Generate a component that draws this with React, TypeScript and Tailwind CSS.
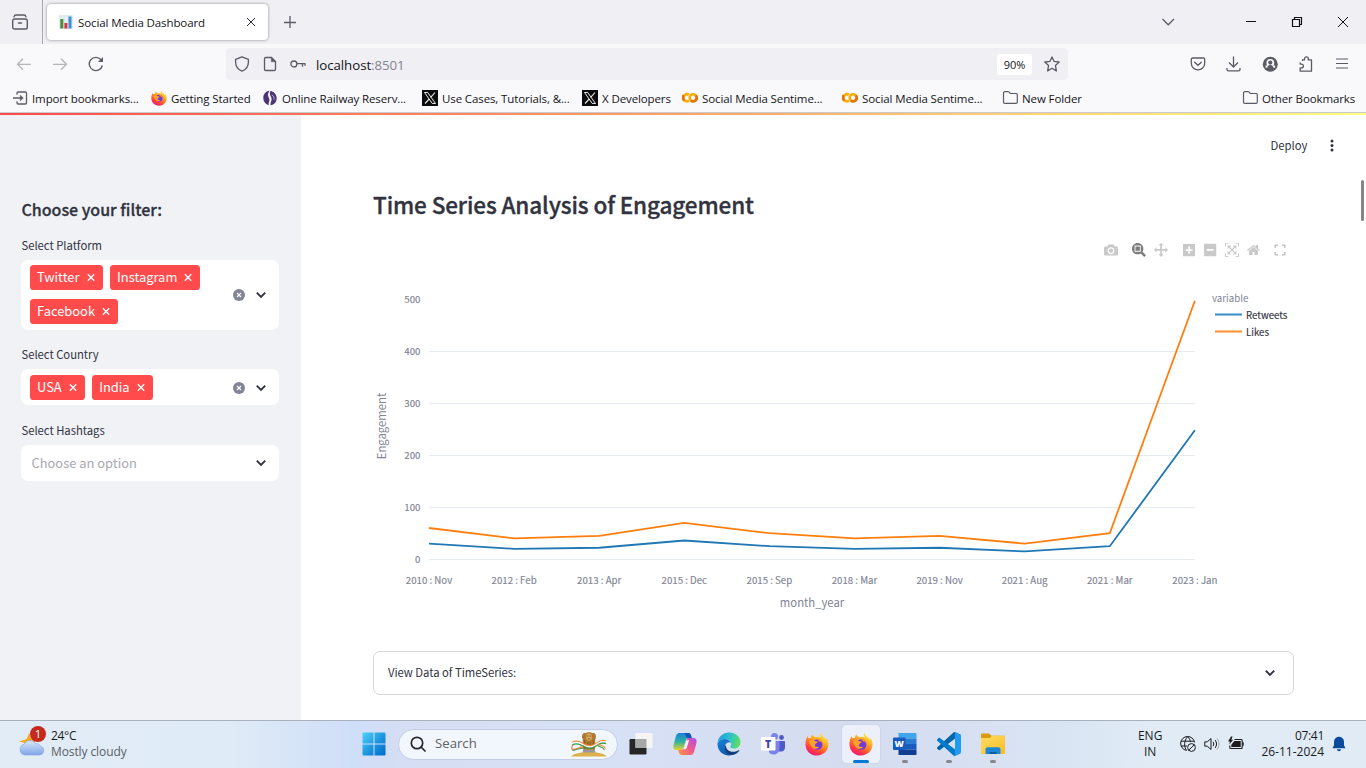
import React from 'react';

const UI = 'font-["Open_Sans","Noto_Sans",sans-serif]';
const SRC = 'font-["Noto_Sans_CJK_SC",sans-serif]';

/* ---------- brand marks ---------- */

function Firefox({ id, className }: { id: string; className: string }) {
  return (
    <svg viewBox="0 0 24 24" className={className}>
      <defs>
        <linearGradient id={id} x1="0.8" y1="0" x2="0.25" y2="1">
          <stop offset="0" stopColor="#fff44f" />
          <stop offset="0.3" stopColor="#ffbd2b" />
          <stop offset="0.55" stopColor="#ff7a24" />
          <stop offset="0.8" stopColor="#ff3647" />
          <stop offset="1" stopColor="#e31587" />
        </linearGradient>
      </defs>
      <path
        d="M15.1.3c-.8 2-.4 3.600 1 5.100C14.800 4.700 13 4.700 11 5.200 9 4.600 8 3.600 7.300 2.400 6.200 3.600 5.900 4.900 6 6 5 5.900 4.300 6.100 3.700 6.400 3.100 5.900 2.800 5 2.800 4 1.200 6.300.5 9.200.5 12.400.5 18.700 5.500 23.500 12 23.500S23.500 18.500 23.500 12.300c0-3-1-5.400-2.500-6.800.2.800.3 1.500.2 2.200C19.700 5 16.200 4.500 15.100.3z"
        fill={'url(#' + id + ')'}
      />
      <circle cx="12.200" cy="12.500" r="5.200" fill="#7139d8" />
      <path d="M12 7.300c3.300-.5 6 2 6 5.200-.8-1.800-2.200-2.700-3.900-2.900z" fill="#ff8a2a" />
      <path d="M4.200 8.500C6.500 7 9 8 10.300 9.300c1.200.1 2.600.3 2.500.8-.2.900-1.900 1.300-2.400 1.800-.4.500-.1 1.600-.9 2 1.200 1.200 3.400.7 4.700 1.200-1.500 2-5.200 2.400-7 .3C5.500 13.300 4 11 4.200 8.500z" fill="#ffa02b" />
    </svg>
  );
}

function XMark() {
  return (
    <svg viewBox="0 0 16 16" className="h-4 w-4">
      <rect width="16" height="16" fill="#0b0b0b" />
      <path d="M2.500 2.500h3.200l7.800 11h-3.200z" fill="none" stroke="#e8e8e8" strokeWidth="1" />
      <path d="M13 2.500L8.700 7.300M7.200 9L3 13.500" stroke="#e8e8e8" strokeWidth="1.100" />
    </svg>
  );
}

function Colab() {
  return (
    <svg viewBox="0 0 16 16" className="h-4 w-4" fill="none" strokeWidth="2.600">
      <path d="M7 4.900A3.500 3.500 0 1 0 7 10.600" stroke="#f9ab00" />
      <path d="M1.900 5.300A3.500 3.500 0 0 0 2.200 10.400" stroke="#e8710a" />
      <circle cx="11.200" cy="7.800" r="3.500" stroke="#f9ab00" />
      <path d="M8.700 10.300A3.500 3.500 0 0 0 13.700 5.300" stroke="#e8710a" />
    </svg>
  );
}

function RailMark() {
  return (
    <svg viewBox="0 0 16 16" className="h-4 w-4">
      <path d="M7.500.8C3.500 1.300 1.300 4.300 1.300 8c0 3.500 2.300 6.400 5.700 7.200C5.800 13 8 11.500 7.300 9 6.700 7 4.700 5 7.500.8z" fill="#4b3577" />
      <path d="M8.500 1C6.600 4 9.500 6.500 9.600 9c.1 2.300-1.600 3.800-1 6.200C12.300 15 14.700 11.900 14.700 8.300c0-3.600-2.500-6.700-6.200-7.300z" fill="#4b3577" />
      <path d="M9.800 4.800c2 1.200 2.700 3 2.200 5" stroke="#cfc8e0" strokeWidth="0.800" fill="none" />
    </svg>
  );
}

function Folder() {
  return (
    <svg viewBox="0 0 16 16" className="h-4 w-4" fill="none" stroke="#5b5b66" strokeWidth="1.200">
      <path d="M1.500 4V3a1.300 1.300 0 0 1 1.300-1.300h3.200c.5 0 .8.2 1.100.5l1.100 1.300h5.600A1.300 1.300 0 0 1 15.300 4.800v7.200a1.300 1.300 0 0 1-1.300 1.300H2.800A1.300 1.300 0 0 1 1.500 12z" />
    </svg>
  );
}

function ImportIcon() {
  return (
    <svg viewBox="0 0 16 16" className="h-4 w-4" fill="none" stroke="#5b5b66" strokeWidth="1.300">
      <path d="M5 4.800V3.200A1.200 1.200 0 0 1 6.200 2h7.100A1.200 1.200 0 0 1 14.500 3.200v9.600a1.200 1.200 0 0 1-1.200 1.200H6.200A1.200 1.200 0 0 1 5 12.800v-1.600M1 8h9" />
      <path d="M8.300 5.200L11.300 8l-3 2.800z" fill="#5b5b66" strokeWidth="0.600" />
    </svg>
  );
}

/* ---------- browser chrome ---------- */

function TabStrip() {
  return (
    <div className="flex h-11 shrink-0 items-center bg-[#f0eff4]">
      <div className="flex h-11 w-[43px] shrink-0 items-center justify-end border-r border-[#a9a9b0] pr-[14px]">
        <svg viewBox="0 0 16 16" className="h-4 w-4" fill="none" stroke="#5b5b66" strokeWidth="1.400" strokeLinecap="round">
          <rect x="0.700" y="5" width="14.600" height="10" rx="1.800" />
          <path d="M2 2.800C2.300 1.500 3 1 4 1h8c1 0 1.700.5 2 1.800M6.500 9h3" />
        </svg>
      </div>
      <div className="ml-1 flex h-9 w-[221px] items-center rounded bg-white pl-3 pr-[11px] shadow-[0_0_3px_rgba(0,0,0,0.45)]">
        <svg viewBox="0 0 14 14" className="h-[14px] w-[14px]">
          <rect width="14" height="14" rx="1" fill="#dce9ee" />
          <path d="M0 3.500h14M0 7h14M0 10.500h14M3.500 0v14M7 0v14M10.500 0v14" stroke="#f4f8fa" strokeWidth="0.600" />
          <rect x="1.300" y="4" width="3" height="9.500" fill="#4c8f34" />
          <rect x="5.400" y="8" width="3" height="5.500" fill="#d8314a" />
          <rect x="9.500" y="1.500" width="3" height="12" fill="#3d8fd6" />
        </svg>
        <span className={UI + ' ml-[5px] flex-1 whitespace-nowrap pt-[2px] text-[11.500px] tracking-[-0.110px] text-[#15141a]'}>Social Media Dashboard</span>
        <svg viewBox="0 0 12 12" className="h-3 w-3" stroke="#2b2a33" strokeWidth="1"><path d="M2 2l8 8M10 2l-8 8" /></svg>
      </div>
      <svg viewBox="0 0 14 14" className="ml-[15px] h-[14px] w-[14px]" stroke="#5b5b66" strokeWidth="1.300"><path d="M7 1v12M1 7.500h12" /></svg>
      <div className="flex flex-1 items-center justify-end pr-[17px]">
        <svg viewBox="0 0 14 8" className="mr-[70px] h-2 w-[14px]" fill="none" stroke="#5b5b66" strokeWidth="1.300"><path d="M1.500 1l5.700 5.800L13 1" /></svg>
        <svg viewBox="0 0 12 12" className="mr-[34px] h-3 w-3" shapeRendering="crispEdges"><rect x="1" y="5" width="10" height="1" fill="#111" /></svg>
        <svg viewBox="0 0 12 12" className="mr-[34px] h-3 w-3" fill="none" stroke="#111" strokeWidth="1.200"><path d="M1.500 3.500h7v7h-7zM3.500 3.500v-2h7v7h-2" /></svg>
        <svg viewBox="0 0 12 12" className="h-3 w-3" stroke="#111" strokeWidth="1"><path d="M1 1l10 10M11 1L1 11" /></svg>
      </div>
    </div>
  );
}

function NavBar() {
  return (
    <div className="flex h-10 shrink-0 items-center bg-[#f9f9fb]">
      <div className="flex w-[226px] items-center gap-5 pl-4">
        <svg viewBox="0 0 16 16" className="h-4 w-4" fill="none" stroke="#b5b5bb" strokeWidth="1.300"><path d="M15 8.300H1.500M7 2.800L1.500 8.300 7 13.800" /></svg>
        <svg viewBox="0 0 16 16" className="h-4 w-4" fill="none" stroke="#b5b5bb" strokeWidth="1.300"><path d="M1 8.300h13.500M9 2.800l5.500 5.500L9 13.800" /></svg>
        <svg viewBox="0 0 16 16" className="h-4 w-4" fill="none" stroke="#5b5b66" strokeWidth="1.400"><path d="M14.300 9.500A6.600 6.600 0 1 1 13 3.800L14 5" /><path d="M15 1v5h-5z" fill="#5b5b66" stroke="none" /></svg>
      </div>
      <div className="flex h-8 w-[842px] items-center rounded bg-[#f0eff4] px-2">
        <svg viewBox="0 0 16 16" className="h-4 w-4" fill="none" stroke="#5b5b66" strokeWidth="1.300"><path d="M8 .8L1.600 3.300v2.900c0 4 2.300 7.200 6.400 9 4.100-1.800 6.400-5 6.400-9V3.300z" strokeLinejoin="round" /></svg>
        <svg viewBox="0 0 16 16" className="ml-3 h-4 w-4" fill="none" stroke="#5b5b66" strokeWidth="1.300"><path d="M9.500 1.500H3.700A1.200 1.200 0 0 0 2.500 2.700v10.600a1.200 1.200 0 0 0 1.200 1.200h8.600a1.200 1.200 0 0 0 1.200-1.200V5.500z" /><path d="M9.300 1.300v4.400h4.400z" fill="#5b5b66" strokeWidth="0.500" /></svg>
        <svg viewBox="0 0 16 16" className="ml-3 h-4 w-4" fill="none" stroke="#5b5b66" strokeWidth="1.300"><circle cx="3.900" cy="8" r="3" /><path d="M7 7.700h8.500M12.500 7.700v3M15 7.700v2" /></svg>
        <span className={UI + ' ml-[10px] flex-1 pt-[3px] text-[13.300px] tracking-[-0.070px] text-[#15141a]'}>localhost<span className="text-[#85858d]">:8501</span></span>
        <span className={UI + ' flex h-[21px] w-[35px] items-center justify-center rounded-[3px] bg-white pt-[2px] text-[11px] text-[#15141a]'}>90%</span>
        <svg viewBox="0 0 16 16" className="ml-3 h-4 w-4" fill="none" stroke="#5b5b66" strokeWidth="1.300" strokeLinejoin="round"><path d="M8 .9l2.100 4.500 5.100.6-3.800 3.400 1 5.500L8 12.300l-4.400 2.600 1-5.500L.8 6l5.100-.6z" /></svg>
      </div>
      <div className="flex flex-1 items-center justify-end gap-5 pr-4">
        <svg viewBox="0 0 16 16" className="h-4 w-4" fill="none" stroke="#5b5b66" strokeWidth="1.300"><path d="M2.500 2h11a1.200 1.200 0 0 1 1.200 1.200v4A6.700 6.700 0 0 1 8 13.900 6.700 6.700 0 0 1 1.300 7.200v-4A1.200 1.200 0 0 1 2.500 2z" /><path d="M4.700 6.200L8 9.300l3.300-3.100" strokeLinecap="round" /></svg>
        <svg viewBox="0 0 16 16" className="h-4 w-4" fill="none" stroke="#5b5b66" strokeWidth="1.300"><path d="M7.500.5v10.300M3 6.500L7.500 11 12 6.500M1 12v1.500a1.300 1.300 0 0 0 1.300 1.300h10.400a1.300 1.300 0 0 0 1.300-1.300V12" /></svg>
        <svg viewBox="0 0 16 16" className="h-4 w-4"><circle cx="8.300" cy="8.300" r="7.500" fill="#5b5b66" /><circle cx="8.300" cy="7" r="3.900" fill="#f9f9fb" /><circle cx="8.300" cy="6.600" r="2.100" fill="#5b5b66" /><path d="M3.500 9.500h9.600v2.200H3.500z" fill="#f9f9fb" /><path d="M5.300 12c0-1.800 1.100-3 3-3s3 1.200 3 3z" fill="#5b5b66" /></svg>
        <svg viewBox="0 0 16 16" className="h-4 w-4" fill="none" stroke="#5b5b66" strokeWidth="1.300" strokeLinejoin="round"><path d="M4.500 5V3.900h2V2.800a1.900 1.900 0 0 1 3.800 0v1.100h3.200v11.300H2.200v-3.300h1.300a1.900 1.900 0 0 0 0-3.800H2.200V6.500" /></svg>
        <svg viewBox="0 0 16 16" className="h-4 w-4" stroke="#5b5b66" strokeWidth="1.200"><path d="M2 3h12M2 7.500h12M2 12h12" /></svg>
      </div>
    </div>
  );
}

function Bookmark({ w, icon, children }: { w: string; icon: React.ReactNode; children: React.ReactNode }) {
  return (
    <div className={w + ' flex items-center gap-1'}>
      {icon}
      <span className={UI + ' whitespace-nowrap pt-px text-[11.500px] tracking-[-0.110px] text-[#15141a]'}>{children}</span>
    </div>
  );
}

function BookmarksBar() {
  return (
    <div className="flex h-[29px] shrink-0 border-b border-[#c9c9d0] bg-[#f9f9fb] pl-3">
      <Bookmark w="w-[139px]" icon={<ImportIcon />}>Import bookmarks...</Bookmark>
      <Bookmark w="w-[111px]" icon={<Firefox id="ffb" className="h-4 w-4" />}>Getting Started</Bookmark>
      <Bookmark w="w-[160px]" icon={<RailMark />}>Online Railway Reserv...</Bookmark>
      <Bookmark w="w-[160px]" icon={<XMark />}>Use Cases, Tutorials, &amp;...</Bookmark>
      <Bookmark w="w-[100px]" icon={<XMark />}>X Developers</Bookmark>
      <Bookmark w="w-[160px]" icon={<Colab />}>Social Media Sentime...</Bookmark>
      <Bookmark w="w-[160px]" icon={<Colab />}>Social Media Sentime...</Bookmark>
      <Bookmark w="w-[240px]" icon={<Folder />}>New Folder</Bookmark>
      <Bookmark w="w-[120px]" icon={<Folder />}>Other Bookmarks</Bookmark>
    </div>
  );
}

/* ---------- sidebar ---------- */

function Tag({ children }: { children: string }) {
  return (
    <span className="flex h-[25px] items-center gap-[7px] rounded-[3.600px] bg-[#ff4b4b] px-[7px] text-[12.900px] text-white">
      <span className="pb-[2px] leading-[23px]">{children}</span>
      <svg viewBox="0 0 10 10" className="h-[9px] w-[9px]" stroke="#fff" strokeWidth="1.500"><path d="M1 1.500l7 7M8 1.500l-7 7" /></svg>
    </span>
  );
}

function Chevron() {
  return (
    <svg viewBox="0 0 10 8" className="h-2 w-[10px] shrink-0" fill="none" stroke="#31333f" strokeWidth="1.900"><path d="M.8 1.700L5 5.900l4.200-4.200" /></svg>
  );
}

function Clear() {
  return (
    <svg viewBox="0 0 12 12" className="mr-[11px] h-3 w-3 shrink-0"><circle cx="6" cy="6" r="6" fill="#808495" /><path d="M4 4l4 4M8 4L4 8" stroke="#fff" strokeWidth="1.200" /></svg>
  );
}

function Select({ label, box, tags, placeholder }: { label: string; box: string; tags?: string[]; placeholder?: string }) {
  return (
    <div className="flex flex-col">
      <label className="h-[25px] pl-[0.500px] text-[11.300px] leading-[20px] tracking-[-0.030px]">{label}</label>
      <div className={box + ' flex items-center rounded-[7px] bg-white pl-[9px] pr-[13px]'}>
        <div className="flex flex-1 flex-wrap gap-x-[7.500px] gap-y-[9px]">
          {tags ? tags.map((t) => <Tag key={t}>{t}</Tag>) : <span className="pl-[1.500px] text-[12.900px] leading-5 text-[#a8a9b0]">{placeholder}</span>}
        </div>
        {tags && <Clear />}
        <Chevron />
      </div>
    </div>
  );
}

function Sidebar() {
  return (
    <aside className="w-[301px] shrink-0 bg-[#f0f2f6] pl-[21px] pr-[22px] pt-[81px]">
      <h2 className="mb-[13px] h-[26px] pl-[0.500px] text-base font-medium leading-[26px] [-webkit-text-stroke:0.300px_#31333f]">Choose your filter:</h2>
      <div className="flex flex-col gap-[14px]">
        <Select label="Select Platform" box="h-[70px] pb-px" tags={['Twitter', 'Instagram', 'Facebook']} />
        <Select label="Select Country" box="h-9 pt-px" tags={['USA', 'India']} />
        <div className="pt-px"><Select label="Select Hashtags" box="h-9" placeholder="Choose an option" /></div>
      </div>
    </aside>
  );
}

/* ---------- chart ---------- */

const MONTHS = ['2010 : Nov', '2012 : Feb', '2013 : Apr', '2015 : Dec', '2015 : Sep', '2018 : Mar', '2019 : Nov', '2021 : Aug', '2021 : Mar', '2023 : Jan'];
const RETWEETS = [30, 20, 22, 36, 25, 20, 22, 15, 25, 248];
const LIKES = [60, 40, 45, 70, 50, 40, 45, 30, 50, 497];
const STEP = 85.1;
const sx = (i: number) => 56 + i * STEP;
const sy = (v: number) => 269.2 - v * 0.52;
const line = (d: number[]) => d.map((v, i) => sx(i) + ',' + sy(v)).join(' ');

function Chart() {
  return (
    <svg viewBox="0 0 921 335" className="block h-[335px] w-[921px] overflow-visible" fill="#808495" fontSize="9.7">
      {[0, 100, 200, 300, 400].map((v) => (
        <line key={v} x1="56" x2="822" y1={sy(v) + 0.3} y2={sy(v) + 0.3} stroke="#e6eaf1" strokeWidth="1.200" />
      ))}
      {[0, 100, 200, 300, 400, 500].map((v) => (
        <text key={v} x="47.500" y={sy(v) + 4} textAnchor="end" stroke="#808495" strokeWidth="0.150">{v}</text>
      ))}
      {MONTHS.map((m, i) => (
        <text key={m} x={sx(i)} y="294" textAnchor="middle" stroke="#808495" strokeWidth="0.150">{m}</text>
      ))}
      <text x="439" y="317" textAnchor="middle" fontSize="11.3">month_year</text>
      <text transform="translate(13 136) rotate(-90)" textAnchor="middle" fontSize="11.3">Engagement</text>
      <polyline points={line(RETWEETS)} fill="none" stroke="#1f77b4" strokeWidth="1.800" />
      <polyline points={line(LIKES)} fill="none" stroke="#ff7f0e" strokeWidth="1.800" />
      <text x="839" y="12">variable</text>
      <line x1="842" x2="869" y1="24.500" y2="24.500" stroke="#4190c9" strokeWidth="2.100" />
      <line x1="842" x2="869" y1="41.500" y2="41.500" stroke="#ff9433" strokeWidth="2.100" />
      <text x="873" y="29" fill="#31333f" stroke="#31333f" strokeWidth="0.150">Retweets</text>
      <text x="873" y="46" fill="#31333f" stroke="#31333f" strokeWidth="0.150">Likes</text>
    </svg>
  );
}

const MODE_ICONS = [
  { w: 1000, gap: 'mr-[14px]', c: '#c9c9c9', d: 'm500 450c-83 0-150-67-150-150 0-83 67-150 150-150 83 0 150 67 150 150 0 83-67 150-150 150z m400 150h-120c-16 0-34 13-39 29l-31 93c-6 15-23 28-40 28h-340c-16 0-34-13-39-28l-31-94c-6-15-23-28-40-28h-120c-55 0-100-45-100-100v-450c0-55 45-100 100-100h800c55 0 100 45 100 100v450c0 55-45 100-100 100z m-400-550c-138 0-250 112-250 250 0 138 112 250 250 250 138 0 250-112 250-250 0-138-112-250-250-250z m365 380c-19 0-35 16-35 35 0 19 16 35 35 35 19 0 35-16 35-35 0-19-16-35-35-35z' },
  { w: 1000, gap: 'mr-[8px]', c: '#7d7d7d', d: 'm1000-25l-250 251c40 63 63 138 63 218 0 224-182 406-407 406-224 0-406-182-406-406s183-406 407-406c80 0 155 22 218 62l250-250 125 125z m-812 250l0 438 437 0 0-438-437 0z m62 375l313 0 0-312-313 0 0 312z' },
  { w: 1000, gap: 'mr-[15.500px]', c: '#c9c9c9', d: 'm1000 350l-187 188 0-125-250 0 0 250 125 0-188 187-187-187 125 0 0-250-250 0 0 125-188-188 186-187 0 125 252 0 0-250-125 0 187-188 188 188-125 0 0 250 250 0 0-126 187 188z' },
  { w: 875, gap: 'mr-[9px]', c: '#c9c9c9', d: 'm1 787l0-875 875 0 0 875-875 0z m687-500l-187 0 0-187-125 0 0 187-188 0 0 125 188 0 0 187 125 0 0-187 187 0 0-125z' },
  { w: 875, gap: 'mr-[8.500px]', c: '#c9c9c9', d: 'm0 788l0-876 875 0 0 876-875 0z m688-500l-500 0 0 125 500 0 0-125z' },
  { w: 1000, gap: 'mr-[7.500px]', c: '#c9c9c9', d: 'm250 850l-187 0-63 0 0-62 0-188 63 0 0 188 187 0 0 62z m688 0l-188 0 0-62 188 0 0-188 62 0 0 188 0 62-62 0z m-875-938l0 188-63 0 0-188 0-62 63 0 187 0 0 62-187 0z m875 188l0-188-188 0 0-62 188 0 62 0 0 62 0 188-62 0z m-125 188l-1 0-93-94-156 156 156 156 92-93 2 0 0 250-250 0 0-2 93-92-156-156-156 156 94 92 0 2-250 0 0-250 0 0 93 93 157-156-157-156-93 94 0 0 0-250 250 0 0 0-94 93 156 157 156-157-93-93 0 0 250 0 0 250z' },
  { w: 929, gap: 'mr-[14.500px]', c: '#c9c9c9', d: 'm786 296v-267q0-15-11-26t-25-10h-214v214h-143v-214h-214q-15 0-25 10t-11 26v267q0 1 0 2t0 2l321 264 321-264q1-1 1-4z m124 39l-34-41q-5-5-12-6h-2q-7 0-12 3l-386 322-386-322q-7-4-13-4-7 2-12 7l-35 41q-4 5-3 13t6 12l401 334q18 15 42 15t43-15l136-114v109q0 8 5 13t13 5h107q8 0 13-5t5-13v-227l122-102q5-5 6-12t-4-13z' },
];

function ModeBar() {
  return (
    <div className="flex h-[14px] items-center justify-end pr-[8px]">
      {MODE_ICONS.map((m, i) => (
        <svg key={i} viewBox={'0 0 ' + m.w + ' 1000'} className={m.gap + ' h-[14px] w-auto'}>
          <path d={m.d} fill={m.c} transform="matrix(1 0 0 -1 0 850)" />
        </svg>
      ))}
      <svg viewBox="0 0 12 12" className="h-3 w-3" fill="none" stroke="#c6c6c6" strokeWidth="1.600"><path d="M1.300 4V1.300H4M8 1.300h2.700V4M10.700 8v2.700H8M4 10.700H1.300V8" /></svg>
    </div>
  );
}

function Main() {
  return (
    <main className="relative flex-1 bg-white">
      <div className="flex h-[61px] items-center justify-end pr-[28px] text-[11.300px] text-[#31333f]">
        <span>Deploy</span>
        <svg viewBox="0 0 12 14" className="ml-[18.500px] h-[14px] w-3" fill="#31333f"><circle cx="6" cy="2" r="1.500" /><circle cx="6" cy="6.500" r="1.500" /><circle cx="6" cy="11" r="1.500" /></svg>
      </div>
      <div className="ml-[72px] w-[921px]">
        <h3 className="mt-[12px] h-[33px] text-[22.500px] font-medium leading-[33px] tracking-[-0.120px] [-webkit-text-stroke:0.350px_#31333f]">Time Series Analysis of Engagement</h3>
        <div className="mt-[22px]"><ModeBar /></div>
        <div className="mt-[33px]"><Chart /></div>
        <div className="mt-[26px] flex h-[44px] items-center justify-between rounded-[7px] border border-[#d5d6d9] pl-[14px] pr-[18px] text-[11.300px] tracking-[-0.030px]">
          <span className="pb-px">View Data of TimeSeries:</span>
          <Chevron />
        </div>
      </div>
      <div className="absolute right-[2px] top-[65px] h-[41px] w-[3px] rounded bg-[#85858a]" />
    </main>
  );
}

/* ---------- taskbar ---------- */

function App24({ children, dot, active }: { children: React.ReactNode; dot?: boolean; active?: boolean }) {
  return (
    <div className={(active ? 'bg-[#ecf0fa] shadow-[0_0_1px_rgba(90,100,130,0.4)] ' : '') + 'relative flex h-[38px] w-[38px] items-center justify-center rounded'}>
      {children}
      {active && <span className="absolute bottom-0 h-[3px] w-4 rounded-full bg-[#0078d4]" />}
      {dot && <span className="absolute bottom-0 h-[3px] w-[6px] rounded-full bg-[#85888f]" />}
    </div>
  );
}

function Emblem() {
  return (
    <svg viewBox="0 0 38 26" className="h-[26px] w-[38px]">
      <path d="M1 25.500C4 22.500 10 21 19 21s15 1.500 18 4.500z" fill="#dcb04a" />
      <path d="M13.500 18h11l1 3.500h-13z" fill="#9a989c" />
      <path d="M12.500 3.500c.5-1.300 2-1.800 3.200-1.200C16.500.8 21.500.8 22.300 2.300c1.200-.6 2.700-.1 3.200 1.200.8 1.500.6 3.400-.2 4.500L25 18.500H13L12.700 8c-.8-1.100-1-3-.2-4.500z" fill="#b07a30" />
      <path d="M16.500 3.500c1.300-1.200 3.700-1.200 5 0l.3 4.500-2.800 2-2.800-2z" fill="#d9ad62" />
      <path d="M14.700 9v8.500M17.700 11v6.500M20.300 11v6.500M23.300 9v8.500" stroke="#80551f" strokeWidth="0.900" />
      <path d="M17.200 5h1.200M19.600 5h1.200M18.200 7.800h1.600" stroke="#5d3c14" strokeWidth="0.900" />
      <g fill="none" strokeWidth="1.300">
        <path d="M2 11.500c3-2 7-1.500 11 1s9 3 13 0 7-4 10-2.500" stroke="#ef8a3f" />
        <path d="M2 12.800c3-2 7-1.500 11 1s9 3 13 0 7-4 10-2.500" stroke="#fff" />
        <path d="M2 14.100c3-2 7-1.500 11 1s9 3 13 0 7-4 10-2.500" stroke="#3f9b4d" />
        <path d="M3 13.500C1 17 1.500 19 4 18.500s5-2 9-2.500" stroke="#ef8a3f" />
        <path d="M2.500 19.500c3.500-.5 6-2 10.500-2.300" stroke="#3f9b4d" strokeWidth="1" />
        <path d="M28 13.500c3 1 6 1 7.500 4" stroke="#ef8a3f" strokeWidth="1.100" />
        <path d="M28 15c3 1 5 1 6.500 4" stroke="#3f9b4d" strokeWidth="1.100" />
      </g>
    </svg>
  );
}

function Taskbar() {
  return (
    <footer className={UI + ' flex h-12 shrink-0 items-center border-t border-[#a9b1bf] bg-[linear-gradient(90deg,#e1ecf6_0%,#dfebf7_17%,#cfdef8_26%,#d5def3_30%,#d7e1f6_42%,#d5dcf0_62%,#d8e3f3_76%,#e0ebf6_84%,#e0ebf6_100%)]'}>
      <div className="flex w-[354px] items-center pl-[18px]">
        <div className="relative h-7 w-7">
          <svg viewBox="0 0 28 28" className="h-7 w-7">
            <defs><linearGradient id="cloud" x1="0" y1="0" x2="0" y2="1"><stop offset="0" stopColor="#dbe8fb" /><stop offset="1" stopColor="#7ea6e6" /></linearGradient></defs>
            <path d="M11 1.500l2 5.500 5 1-3 8H5l2-4-6-1.500 5-1.500c2 0 4-2 5-7.500z" fill="#f5a623" />
            <path d="M7 24a5.500 5.500 0 0 1-.8-10.800A6.300 6.300 0 0 1 17.500 12.700a4.300 4.300 0 0 1 4.800 2.300 4.600 4.600 0 0 1-.5 9z" fill="url(#cloud)" stroke="#7fa3dd" strokeWidth="0.600" />
          </svg>
          <span className="absolute -top-[5px] left-3 flex h-4 w-4 items-center justify-center rounded-full bg-[#c42b1c] text-[11.500px] text-white">1</span>
        </div>
        <div className="ml-[5px] flex flex-col pb-[2px] text-xs leading-4 text-[#1b1b1b]">
          <span className="tracking-[-0.300px]">24°C</span>
          <span className="tracking-[-0.100px] text-[#5c6066]">Mostly cloudy</span>
        </div>
      </div>
      <div className="flex items-center pb-px">
        <div className="flex w-[39px] justify-center">
          <svg viewBox="0 0 24 24" className="h-6 w-6">
            <defs><linearGradient id="win" x1="0" y1="0" x2="1" y2="1"><stop offset="0" stopColor="#4fd2fb" /><stop offset="0.550" stopColor="#1c93de" /><stop offset="1" stopColor="#0069cc" /></linearGradient></defs>
            <path d="M1.500.5h10v11H.5v-10a1 1 0 0 1 1-1zM12.500.5h10a1 1 0 0 1 1 1v10h-11zM.5 12.500h11v11h-10a1 1 0 0 1-1-1zM12.500 12.500h11v10a1 1 0 0 1-1 1h-10z" fill="url(#win)" />
          </svg>
        </div>
        <div className="ml-[5px] flex h-[31px] w-[220px] items-center rounded-full border border-[#c3cde3] bg-[#f2f6fd] pl-[11px] pr-[9px]">
          <svg viewBox="0 0 16 16" className="h-4 w-4" fill="none" stroke="#26272b" strokeWidth="1.700"><circle cx="7" cy="7" r="5.700" /><path d="M11 11l4 4" strokeLinecap="round" /></svg>
          <span className="ml-[9px] flex-1 text-[13.200px] text-[#5f6268]">Search</span>
          <Emblem />
        </div>
        <div className="ml-1 flex gap-[6px]">
          <App24>
            <svg viewBox="0 0 24 24" className="h-6 w-6"><rect x="0.500" y="7" width="17" height="15.500" rx="1.200" fill="#262626" /><rect x="6.500" y="1" width="17" height="15" rx="1" fill="#f5f5f5" /><path d="M6.500 7h11v9h-11z" fill="#a8a8a8" /></svg>
          </App24>
          <App24>
            <svg viewBox="0 0 24 24" className="h-6 w-6">
              <defs>
                <linearGradient id="cpa" x1="0" y1="0" x2="0" y2="1"><stop offset="0" stopColor="#1a7fdc" /><stop offset="0.500" stopColor="#2bb2a0" /><stop offset="1" stopColor="#e8d22c" /></linearGradient>
                <linearGradient id="cpb" x1="1" y1="0" x2="0" y2="1"><stop offset="0" stopColor="#a851e6" /><stop offset="0.500" stopColor="#f2578c" /><stop offset="1" stopColor="#fb9a3c" /></linearGradient>
              </defs>
              <path d="M6.500 1h8.800c1.500 0 2.300 1 2.700 2.500l.8 2.700h-3.300c-1.500 0-2.300.8-2.700 2.200L10.500 16c-.4 1.300-1.200 2-2.500 2H3.500C.6 18-.1 15.700.7 12.500l2-7.500C3.400 2.400 4.500 1 6.500 1z" fill="url(#cpa)" />
              <path d="M11 1h4.300c1.500 0 2.300 1 2.700 2.500l.8 2.700h-3c-1.700 0-2.500-.7-3-2.400C12.400 2.400 12 1.600 11 1z" fill="#1652b8" />
              <path d="M17.500 23H8.700c-1.500 0-2.300-1-2.700-2.500L5.200 18h3c1.500 0 2.300-.8 2.700-2.200L13.500 8c.4-1.300 1.200-2 2.500-2h4.500c2.900 0 3.600 2.300 2.800 5.500l-2 7.500c-.7 2.600-1.800 4-3.800 4z" fill="url(#cpb)" />
              <path d="M10.900 15.800L13.300 8.300h2.800l-2.300 7.500c-.3.900-.9 1.500-1.800 1.500h-1.600z" fill="#f4f2fa" />
            </svg>
          </App24>
          <App24>
            <svg viewBox="0 0 24 24" className="h-6 w-6">
              <defs>
                <linearGradient id="eda" x1="0" y1="0.300" x2="1" y2="0.500"><stop offset="0" stopColor="#1b9de0" /><stop offset="0.550" stopColor="#2fc3c9" /><stop offset="1" stopColor="#5fe05a" /></linearGradient>
                <linearGradient id="edb" x1="0" y1="0" x2="0.600" y2="1"><stop offset="0" stopColor="#1a86d9" /><stop offset="1" stopColor="#0f56a8" /></linearGradient>
              </defs>
              <path d="M.5 11C1.200 4.800 6 .5 12 .5c6.500 0 11.500 4.400 11.500 9.700 0 3.600-2.700 6.300-6.300 6.300-2.500 0-4-.8-4-1.700 0-.6.900-.9.900-2.600 0-2.600-3-5.200-6.800-5.200-3.100 0-5.600 1.400-6.800 4z" fill="url(#eda)" />
              <path d="M.5 11.300C1.700 8.500 4.300 7 7.300 7c3.300 0 5.900 1.800 6.600 4-1-1.200-5.300-1-6 3.500-.6 4.300 3.300 8.300 7.600 8.200-1 .5-2.200.8-3.500.8C5.500 23.500.5 18.500.5 12z" fill="url(#edb)" />
              <path d="M8.900 13.200C8.700 17 12 19.800 15.800 19.800c2.700 0 4.700-.9 6-1.800.5-.3.800 0 .5.500-1.500 2.400-4 4.100-6.900 4.400-4.300.3-8.200-3.400-7.500-8 .2-1 .5-1.400 1-1.700z" fill="#123f7c" />
            </svg>
          </App24>
          <App24>
            <svg viewBox="0 0 24 24" className="h-6 w-6">
              <circle cx="20.500" cy="5.500" r="2.400" fill="#5059c9" /><path d="M17 9h6.300c.4 0 .7.300.7.700V15c0 3-1.500 4.500-4 4.500h-3z" fill="#5059c9" />
              <circle cx="13.500" cy="4.500" r="3.500" fill="#7b83eb" /><path d="M8 9h10.500v7.500a6 6 0 0 1-10.500 4z" fill="#7b83eb" />
              <rect x="0" y="5" width="14.500" height="13.500" rx="1" fill="#fff" />
              <text x="7.200" y="15.500" textAnchor="middle" fontSize="10.500" fontWeight="800" fill="#4049a8">T</text>
            </svg>
          </App24>
          <App24><Firefox id="ff1" className="h-6 w-6" /></App24>
          <App24 active><Firefox id="ff2" className="h-6 w-6" /></App24>
          <App24 dot>
            <svg viewBox="0 0 24 24" className="h-6 w-6">
              <path d="M5.500 1h17.300c.4 0 .7.300.7.700V6.500h-18z" fill="#41a5ee" /><path d="M5.500 6.500h18V12h-18z" fill="#2b7cd3" /><path d="M5.500 12h18v5.500h-18z" fill="#185abd" /><path d="M5.500 17.500h18v4.800c0 .4-.3.700-.7.700H5.500z" fill="#103f91" />
              <rect x="0" y="5.500" width="12.500" height="12.500" rx="1" fill="#185abd" />
              <text x="6.200" y="15" textAnchor="middle" fontSize="9" fontWeight="800" fill="#fff">W</text>
            </svg>
          </App24>
          <App24 dot>
            <svg viewBox="0 0 100 100" className="h-6 w-6">
              <path d="M96.460 10.800L75.860.880c-2.390-1.150-5.240-.670-7.110 1.200L1.300 63.580c-1.810 1.650-1.810 4.510 0 6.160l5.510 5.010c1.490 1.350 3.720 1.450 5.320.240l81.230-61.620c2.730-2.070 6.640-.120 6.640 3.300v-.240c0-2.400-1.380-4.590-3.540-5.630z" fill="#0065a9" />
              <path d="M96.460 89.200L75.860 99.120c-2.390 1.150-5.240.670-7.110-1.200L1.300 36.420c-1.810-1.650-1.810-4.510 0-6.170l5.510-5c1.490-1.350 3.720-1.450 5.320-.240l81.230 61.620c2.730 2.070 6.640.120 6.640-3.300v.240c0 2.400-1.380 4.590-3.540 5.630z" fill="#007acc" />
              <path d="M75.860 99.130c-2.390 1.150-5.240.660-7.110-1.210 2.310 2.310 6.250.670 6.250-2.590V4.670c0-3.260-3.940-4.890-6.250-2.590 1.870-1.870 4.720-2.350 7.110-1.210l20.600 9.910c2.160 1.040 3.540 3.230 3.540 5.630v67.180c0 2.400-1.380 4.590-3.540 5.630z" fill="#1f9cf0" />
            </svg>
          </App24>
          <App24 dot>
            <svg viewBox="0 0 24 24" className="h-6 w-6">
              <defs><linearGradient id="fol" x1="0" y1="0" x2="1" y2="1"><stop offset="0" stopColor="#ffdc63" /><stop offset="1" stopColor="#f8bd22" /></linearGradient></defs>
              <path d="M0 2.500C0 1.900.4 1.500 1 1.500h7l2.500 2.300H23c.6 0 1 .4 1 1V9H0z" fill="#d99a0b" />
              <path d="M0 6h8.500L11 3.800h12c.6 0 1 .4 1 1V21c0 .6-.4 1-1 1H1c-.6 0-1-.4-1-1z" fill="url(#fol)" />
              <path d="M4.500 22v-4.500c0-1.400.9-2.300 2.300-2.300h10.400c1.400 0 2.300.9 2.300 2.300V22z" fill="#1c87d6" />
              <path d="M8.500 22v-2h7v2z" fill="#0f5f9f" />
            </svg>
          </App24>
        </div>
      </div>
      <div className="flex flex-1 items-center justify-end pb-px pr-5 text-xs leading-4 text-[#1b1b1b]">
        <div className="mr-[18px] flex flex-col items-center"><span>ENG</span><span>IN</span></div>
        <svg viewBox="0 0 16 16" className="mr-2 h-4 w-4" fill="none" stroke="#1b1b1b" strokeWidth="1">
          <path d="M6.500 14.400A7 7 0 1 1 14.600 6.500M.9 5.200h13M.9 10h6M7.600.8C3.800 4.800 3.800 10.500 6.500 14.400M7.600.8c1.800 1.500 2.600 3.300 2.900 5.300" />
          <circle cx="11.500" cy="11.500" r="3.900" /><path d="M8.800 14.200l5.400-5.400" />
        </svg>
        <svg viewBox="0 0 16 16" className="mr-2 h-4 w-4" fill="none" stroke="#1b1b1b" strokeWidth="1">
          <path d="M.8 5.800h2.500L7 2.500v11L3.300 10.200H.8zM9 5.800c1 1.400 1 3 0 4.400M11 4c2 2.500 2 5.500 0 8" /><path d="M13 2.500c2.700 3.500 2.700 7.500 0 11" stroke="#a0a6ad" />
        </svg>
        <svg viewBox="0 0 16 16" className="mr-[17px] h-4 w-4"><path d="M3 .5L0 5.500h2L1.300 8.500 5.200 3.800H3.300L4.600.5z" fill="#1b1b1b" /><path d="M6.500 3.500h6.700c.6 0 1 .4 1 1v7c0 .6-.4 1-1 1H2.800c-.6 0-1-.4-1-1V9.500" fill="none" stroke="#1b1b1b" strokeWidth="1.100" /><path d="M6.300 5h6.400v6H3.300V8.800z" fill="#1b1b1b" /><path d="M14.500 6.300h1.200v3.400h-1.200z" fill="#1b1b1b" /></svg>
        <div className="flex flex-col items-end pb-px"><span className="tracking-[-0.300px]">07:41</span><span>26-11-2024</span></div>
        <svg viewBox="0 0 14 16" className="ml-[8px] h-4 w-[14px]" fill="#0a4a9e"><path d="M7 .8A5 5 0 0 0 2 5.800v3.400L.5 12.300h13L12 9.200V5.800a5 5 0 0 0-5-5zM5 13.300a2 2 0 0 0 4 0z" /></svg>
      </div>
    </footer>
  );
}

export default function App() {
  return (
    <div className="flex h-[768px] w-[1366px] flex-col overflow-hidden bg-white">
      <TabStrip />
      <NavBar />
      <BookmarksBar />
      <div className="h-[2px] shrink-0 bg-[linear-gradient(90deg,#ff4b4b,#fffd80)]" />
      <div className={SRC + ' flex min-h-0 flex-1 text-[#31333f]'}>
        <Sidebar />
        <Main />
      </div>
      <Taskbar />
    </div>
  );
}
